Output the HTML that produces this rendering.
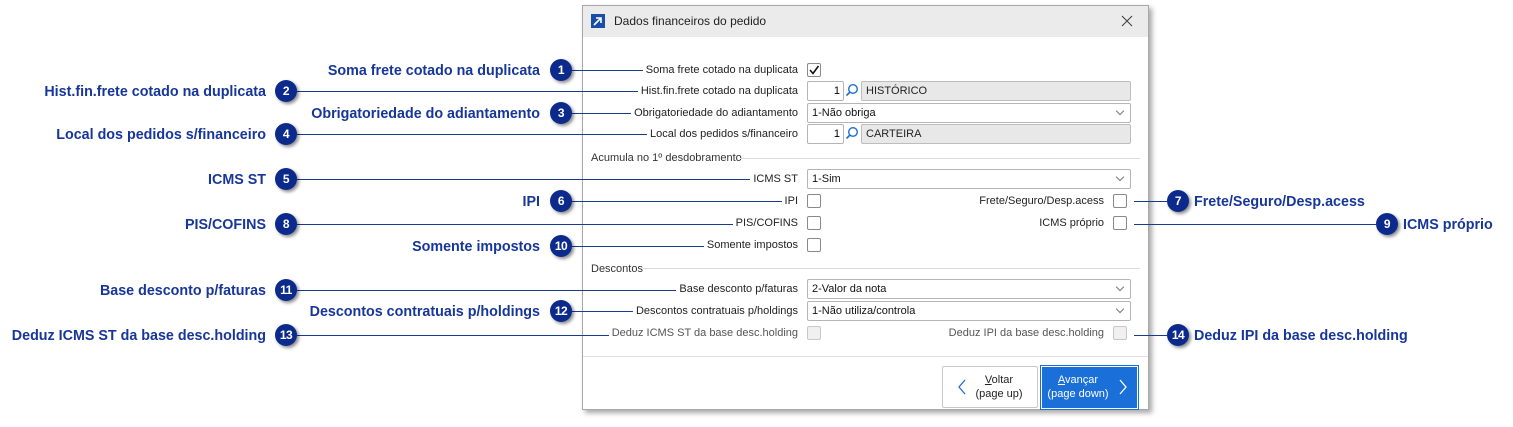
<!DOCTYPE html>
<html><head><meta charset="utf-8"><style>
*{margin:0;padding:0;box-sizing:border-box}
body{width:1513px;height:427px;background:#fff;position:relative;overflow:hidden;font-family:"Liberation Sans",sans-serif}
.a{position:absolute}
.dlg{left:582px;top:5px;width:567px;height:405px;border:1px solid #a8a8a8;background:#fff;box-shadow:3px 3px 5px rgba(0,0,0,.35)}
.tb{left:583px;top:6px;width:565px;height:31px;background:#ebebeb}
.ln{position:absolute;height:1px;background:#1a3a8f}
.bd{position:absolute;width:22px;height:22px;border-radius:50%;background:#0b2a8c;color:#fff;font:bold 12px "Liberation Sans",sans-serif;text-align:center;line-height:22px;box-shadow:2px 2px 3px rgba(0,0,0,.45);letter-spacing:-.5px}
.an{position:absolute;font:bold 14.3px "Liberation Sans",sans-serif;color:#17369a;white-space:nowrap;text-align:right;margin-top:2px}
.lb{position:absolute;right:711px;font-size:11px;color:#222;background:#fff;padding-left:3px;padding-right:4px;white-space:nowrap;line-height:14px}
.cb{position:absolute;width:14px;height:14px;border:1px solid #8a8a8a;border-radius:2px;background:#fff}
.cb.d{border-color:#c8c8c8;background:#f0f0f0}
.sel{position:absolute;left:807px;width:324px;height:20px;border:1px solid #b5b5b5;border-radius:2px;background:#fff;font-size:11px;line-height:18px;padding-left:4px;color:#111}
.sel:after{content:"";position:absolute;right:7px;top:4px;width:5px;height:5px;border-right:1px solid #777;border-bottom:1px solid #777;transform:rotate(45deg)}
.num{position:absolute;left:807px;width:37px;height:20px;border:1px solid #b5b5b5;border-radius:2px;background:#fff;font-size:11px;line-height:18px;text-align:right;padding-right:3px}
.gr{position:absolute;left:861px;width:270px;height:20px;border:1px solid #bdbdbd;border-radius:2px;background:#e8e8e8;font-size:11px;line-height:18px;padding-left:4px;color:#222}
.sec{position:absolute;left:591px;font-size:11px;color:#333;line-height:14px}
.hr{position:absolute;height:1px;background:#dcdcdc}
</style></head><body>
<div class="a dlg"></div>
<div class="a tb"></div>
<div class="a" style="left:591px;top:14px;width:14px;height:14px;background:#1a4fa8"></div>
<svg class="a" style="left:591px;top:14px" width="14" height="14"><path d="M3 11 L10 4 M5 4 H10 V9" stroke="#fff" stroke-width="1.6" fill="none"/></svg>
<div class="a" style="left:614px;top:14px;font-size:12px;color:#222">Dados financeiros do pedido</div>
<svg class="a" style="left:1121px;top:15px" width="12" height="12"><path d="M1 1 L11 11 M11 1 L1 11" stroke="#444" stroke-width="1.1"/></svg>

<div class="sec" style="top:151px">Acumula no 1º desdobramento</div>
<div class="hr" style="left:740px;top:158px;width:400px"></div>
<div class="sec" style="top:262px">Descontos</div>
<div class="hr" style="left:643px;top:268px;width:497px"></div>
<div class="hr" style="left:583px;top:356px;width:565px;background:#e3e3e3"></div>

<div class="ln" style="left:572px;top:70px;width:230px"></div>
<div class="ln" style="left:297px;top:91px;width:505px"></div>
<div class="ln" style="left:572px;top:113px;width:230px"></div>
<div class="ln" style="left:297px;top:134px;width:505px"></div>
<div class="ln" style="left:297px;top:179px;width:505px"></div>
<div class="ln" style="left:572px;top:201px;width:230px"></div>
<div class="ln" style="left:297px;top:224px;width:505px"></div>
<div class="ln" style="left:572px;top:246px;width:230px"></div>
<div class="ln" style="left:297px;top:290px;width:505px"></div>
<div class="ln" style="left:572px;top:311px;width:230px"></div>
<div class="ln" style="left:297px;top:335px;width:505px"></div>
<div class="ln" style="left:1134px;top:201px;width:33px"></div>
<div class="ln" style="left:1134px;top:224px;width:242px"></div>
<div class="ln" style="left:1134px;top:335px;width:33px"></div>

<div class="lb" style="top:63px">Soma frete cotado na duplicata</div>
<div class="lb" style="top:84px">Hist.fin.frete cotado na duplicata</div>
<div class="lb" style="top:106px">Obrigatoriedade do adiantamento</div>
<div class="lb" style="top:127px">Local dos pedidos s/financeiro</div>
<div class="lb" style="top:172px">ICMS ST</div>
<div class="lb" style="top:194px">IPI</div>
<div class="lb" style="top:216px">PIS/COFINS</div>
<div class="lb" style="top:238px">Somente impostos</div>
<div class="lb" style="top:282px">Base desconto p/faturas</div>
<div class="lb" style="top:304px">Descontos contratuais p/holdings</div>
<div class="lb" style="top:326px;color:#555">Deduz ICMS ST da base desc.holding</div>
<div class="lb" style="top:194px;right:405px">Frete/Seguro/Desp.acess</div>
<div class="lb" style="top:216px;right:405px">ICMS próprio</div>
<div class="lb" style="top:326px;right:405px;color:#555">Deduz IPI da base desc.holding</div>

<div class="cb" style="left:807px;top:63px"></div>
<svg class="a" style="left:808px;top:64px" width="12" height="12"><path d="M2 6 L5 9.5 L10.5 2" stroke="#111" stroke-width="1.6" fill="none"/></svg>
<div class="num" style="top:81px">1</div>
<svg class="a" style="left:845px;top:83px" width="14" height="14"><circle cx="8" cy="6" r="4.3" stroke="#1e6fd0" stroke-width="1.4" fill="none"/><path d="M5 9 L1.5 12.5" stroke="#1e6fd0" stroke-width="1.6"/></svg>
<div class="gr" style="top:81px">HISTÓRICO</div>
<div class="sel" style="top:103px">1-Não obriga</div>
<div class="num" style="top:124px">1</div>
<svg class="a" style="left:845px;top:126px" width="14" height="14"><circle cx="8" cy="6" r="4.3" stroke="#1e6fd0" stroke-width="1.4" fill="none"/><path d="M5 9 L1.5 12.5" stroke="#1e6fd0" stroke-width="1.6"/></svg>
<div class="gr" style="top:124px">CARTEIRA</div>
<div class="sel" style="top:169px">1-Sim</div>
<div class="cb" style="left:807px;top:194px"></div>
<div class="cb" style="left:1113px;top:194px"></div>
<div class="cb" style="left:807px;top:216px"></div>
<div class="cb" style="left:1113px;top:216px"></div>
<div class="cb" style="left:807px;top:238px"></div>
<div class="sel" style="top:279px">2-Valor da nota</div>
<div class="sel" style="top:301px">1-Não utiliza/controla</div>
<div class="cb d" style="left:807px;top:326px"></div>
<div class="cb d" style="left:1113px;top:326px"></div>

<div class="a" style="left:942px;top:366px;width:96px;height:42px;border:1px solid #c8c8c8;border-radius:2px;background:#fff"></div>
<svg class="a" style="left:957px;top:379px" width="10" height="16"><path d="M8 1 L2 8 L8 15" stroke="#1e6fd0" stroke-width="1.3" fill="none"/></svg>
<div class="a" style="left:970px;top:373px;width:58px;text-align:center;font-size:11px;line-height:14px;color:#222"><u>V</u>oltar<br>(page up)</div>
<div class="a" style="left:1040px;top:365px;width:99px;height:45px;border:1px solid #1a6fd9"></div>
<div class="a" style="left:1042px;top:367px;width:95px;height:41px;background:#1a6fd9"></div>
<svg class="a" style="left:1118px;top:379px" width="10" height="16"><path d="M2 1 L8 8 L2 15" stroke="#fff" stroke-width="1.3" fill="none"/></svg>
<div class="a" style="left:1044px;top:373px;width:68px;text-align:center;font-size:11px;line-height:14px;color:#fff"><u>A</u>vançar<br>(page down)</div>

<div class="an" style="right:973px;top:61px">Soma frete cotado na duplicata</div>
<div class="an" style="right:1247px;top:82px">Hist.fin.frete cotado na duplicata</div>
<div class="an" style="right:973px;top:104px">Obrigatoriedade do adiantamento</div>
<div class="an" style="right:1247px;top:125px">Local dos pedidos s/financeiro</div>
<div class="an" style="right:1247px;top:170px">ICMS ST</div>
<div class="an" style="right:973px;top:192px">IPI</div>
<div class="an" style="right:1247px;top:215px">PIS/COFINS</div>
<div class="an" style="right:973px;top:237px">Somente impostos</div>
<div class="an" style="right:1247px;top:281px">Base desconto p/faturas</div>
<div class="an" style="right:973px;top:302px">Descontos contratuais p/holdings</div>
<div class="an" style="right:1247px;top:326px">Deduz ICMS ST da base desc.holding</div>
<div class="an" style="left:1194px;top:192px;text-align:left">Frete/Seguro/Desp.acess</div>
<div class="an" style="left:1403px;top:215px;text-align:left">ICMS próprio</div>
<div class="an" style="left:1194px;top:326px;text-align:left">Deduz IPI da base desc.holding</div>

<div class="bd" style="left:550px;top:59px">1</div>
<div class="bd" style="left:275px;top:80px">2</div>
<div class="bd" style="left:550px;top:102px">3</div>
<div class="bd" style="left:275px;top:123px">4</div>
<div class="bd" style="left:275px;top:168px">5</div>
<div class="bd" style="left:550px;top:190px">6</div>
<div class="bd" style="left:1167px;top:190px">7</div>
<div class="bd" style="left:275px;top:213px">8</div>
<div class="bd" style="left:1376px;top:213px">9</div>
<div class="bd" style="left:550px;top:235px">10</div>
<div class="bd" style="left:275px;top:279px">11</div>
<div class="bd" style="left:550px;top:300px">12</div>
<div class="bd" style="left:275px;top:324px">13</div>
<div class="bd" style="left:1167px;top:324px">14</div>
</body></html>
